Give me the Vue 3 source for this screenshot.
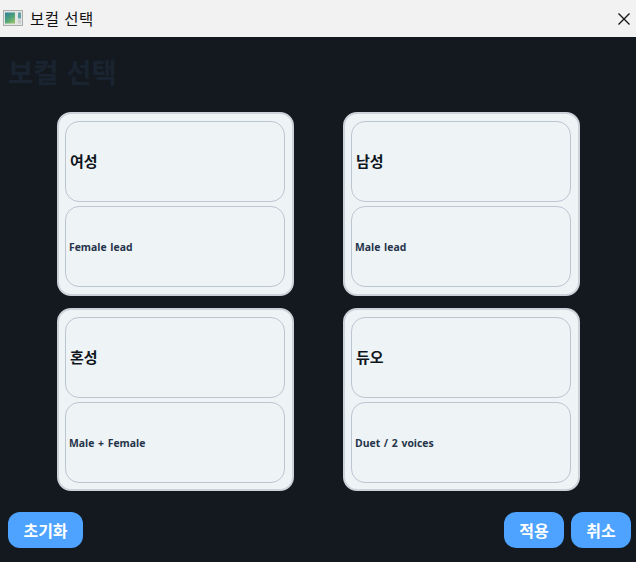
<template>
  <div class="window">
    <div class="titlebar">
      <svg class="app-icon" width="20" height="16" viewBox="0 0 20 16">
        <defs>
          <linearGradient id="pane" x1="0" y1="0" x2="0.7" y2="1">
            <stop offset="0" stop-color="#2f7f9c" />
            <stop offset="0.6" stop-color="#4fa37a" />
            <stop offset="1" stop-color="#8fbf6a" />
          </linearGradient>
        </defs>
        <rect x="0.5" y="0.5" width="19" height="15" fill="#e4e6e4" stroke="#a9adab" />
        <rect x="2" y="2.5" width="10" height="11" fill="url(#pane)" />
        <rect x="15" y="2.5" width="3" height="6" fill="#5fa0a8" />
        <rect x="15" y="9.5" width="3" height="4" fill="#c8cecb" />
      </svg>
      <span class="title">보컬 선택</span>
      <svg class="close" width="12" height="12" viewBox="0 0 12 12">
        <path d="M0.5 0.5 L11.5 11.5 M11.5 0.5 L0.5 11.5" stroke="#111" stroke-width="1.3" fill="none" />
      </svg>
    </div>

    <div class="content">
      <h1 class="heading">보컬 선택</h1>

      <div class="grid">
        <div v-for="item in options" :key="item.name" class="card">
          <div class="cell">
            <span class="name">{{ item.name }}</span>
          </div>
          <div class="cell">
            <span class="desc">{{ item.desc }}</span>
          </div>
        </div>
      </div>

      <div class="actions">
        <button class="btn reset">초기화</button>
        <div class="right">
          <button class="btn small">적용</button>
          <button class="btn small">취소</button>
        </div>
      </div>
    </div>
  </div>
</template>

<script setup>
const options = [
  { name: '여성', desc: 'Female lead' },
  { name: '남성', desc: 'Male lead' },
  { name: '혼성', desc: 'Male + Female' },
  { name: '듀오', desc: 'Duet / 2 voices' },
]
</script>

<style>
html,
body {
  margin: 0;
  background: #14181f;
}
</style>

<style scoped>
* {
  box-sizing: border-box;
}

.window {
  width: 636px;
  height: 562px;
  display: flex;
  flex-direction: column;
  font-family: "Liberation Sans", "Noto Sans CJK KR", sans-serif;
  background: #14181f;
  overflow: hidden;
}

.titlebar {
  height: 37px;
  flex: none;
  display: flex;
  align-items: center;
  padding: 0 6px 2px 3px;
  background: #f2f2f2;
}

.app-icon {
  flex: none;
}

.title {
  margin-left: 7px;
  font-size: 15.5px;
  color: #111;
  letter-spacing: 0.5px;
}

.close {
  margin-left: auto;
  margin-top: 3px;
}

.content {
  flex: 1;
  display: flex;
  flex-direction: column;
  min-height: 0;
}

.heading {
  margin: 0;
  height: 75px;
  padding: 19px 0 0 8px;
  font-size: 27.5px;
  line-height: 36px;
  font-weight: 700;
  color: #1a2430;
}

.grid {
  display: grid;
  grid-template-columns: 237px 237px;
  grid-template-rows: 184px 183px;
  column-gap: 49px;
  row-gap: 12px;
  padding-left: 57px;
}

.card {
  display: flex;
  flex-direction: column;
  gap: 4px;
  padding: 7px 7px 0 6px;
  background: #eef3f6;
  border: 2px solid #ccd2da;
  border-radius: 14px;
}

.cell {
  height: 81px;
  flex: none;
  display: flex;
  align-items: center;
  padding-left: 3px;
  border: 1px solid #bcc5d2;
  border-radius: 14px;
}

.name {
  font-size: 15px;
  font-weight: 700;
  color: #0f1620;
  position: relative;
  top: -1px;
  left: 1px;
}

.desc {
  font-family: "Open Sans", "Noto Sans CJK KR", sans-serif;
  font-size: 10.4px;
  font-weight: 700;
  word-spacing: 1px;
  color: #25344a;
  position: relative;
  top: 0.5px;
}

.actions {
  display: flex;
  justify-content: space-between;
  padding: 21px 5px 0 8px;
}

.right {
  display: flex;
  gap: 7px;
}

.btn {
  height: 36px;
  border: none;
  border-radius: 12px;
  background: #4da3ff;
  color: #fff;
  font-family: inherit;
  font-size: 16px;
  font-weight: 700;
  padding: 0;
}

.reset {
  width: 75px;
}

.small {
  width: 60px;
}
</style>
